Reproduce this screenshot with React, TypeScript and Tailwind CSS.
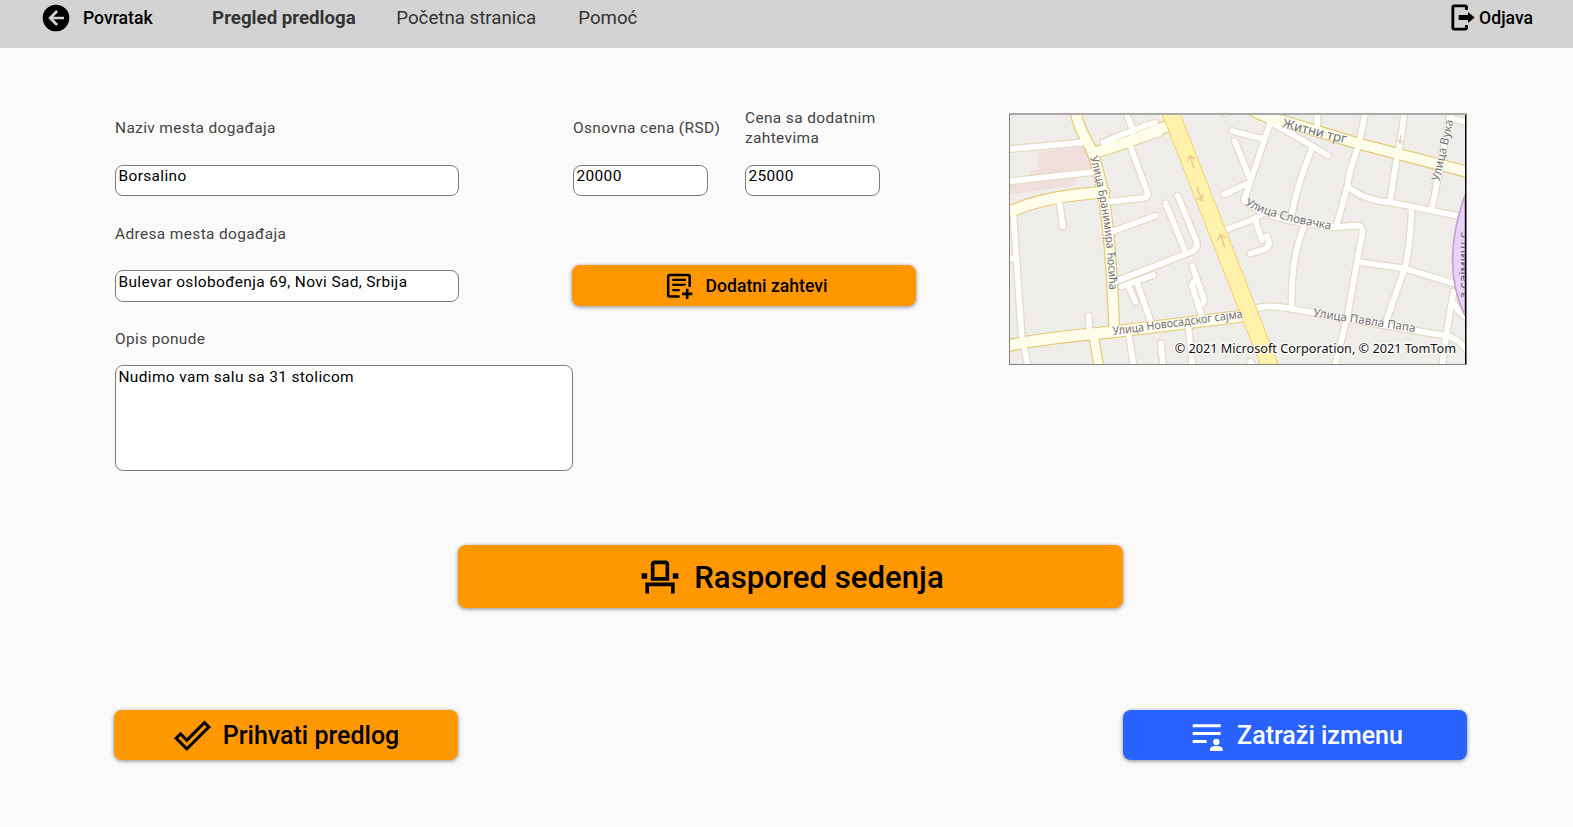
import type { ReactNode } from "react";
import { MdOutlineEventSeat } from "react-icons/md";

const minorRoads = [
  "M20,133 L250,112",
  "M20,230 L290,200",
  "M375,15 L400,80",
  "M390,120 L442,262 Q448,276 430,279 L330,290",
  "M330,382 L467,332",
  "M497,295 L556,440",
  "M533,272 L588,405 Q598,430 575,440 L350,528",
  "M365,545 L460,510",
  "M385,540 L406,590",
  "M410,530 L452,650",
  "M577,483 L611,580 Q614,595 600,600",
  "M588,525 Q570,535 579,552 L605,630",
  "M178,285 L188,365",
  "M40,325 L65,690 L85,790",
  "M20,461 L45,461",
  "M266,632 L268,672",
  "M386,685 L402,790",
  "M483,715 L490,790",
  "M565,660 L578,790",
  "M310,112 L440,60 L465,54",
  "M320,140 L480,84",
  "M672,268 L742,236",
  "M670,377 L710,362 Q760,345 783,330",
  "M765,345 L786,405",
  "M801,393 Q815,422 795,432 L751,446",
  "M697,78 L790,102",
  "M704,108 L750,220",
  "M810,55 L732,285",
  "M808,50 L880,90 L984,151",
  "M936,130 Q892,235 875,330",
  "M952,20 L952,85",
  "M1097,15 Q1085,80 1073,130 Q1045,205 1043,240 L1010,360",
  "M1213,20 Q1205,100 1190,160 L1170,290",
  "M1353,20 L1325,160 L1296,310",
  "M1350,38 L1410,55",
  "M1043,245 Q1090,285 1170,292 L1385,335",
  "M734,288 Q790,335 900,352 L1005,367 L1070,361 Q1092,361 1086,390 Q1065,500 1045,620 L1003,790",
  "M912,365 Q872,460 875,610",
  "M1075,471 L1210,490 L1360,535",
  "M1235,310 Q1230,440 1212,495 L1160,645",
  "M770,610 Q800,598 865,610 L1100,652 L1335,692 Q1375,698 1400,735",
  "M1361,560 Q1345,640 1325,790",
  "M1362,595 Q1375,625 1400,637",
  "M750,770 L765,790",
  "M668,15 L675,25",
];

const localRoads: [string, number][] = [
  ["M225,10 C232,60 250,90 270,125 C315,230 332,390 343,678", 32],
  ["M288,142 L380,112 L505,62", 34],
  ["M20,325 Q130,272 312,262", 35],
  ["M20,723 Q120,700 345,680 L740,632", 35],
  ["M280,690 L298,790", 28],
  ["M745,8 Q790,38 845,47 L1080,117 L1400,200", 33],
];

function Road({ d, width, casing, fill }: { d: string; width: number; casing: string; fill: string }) {
  return (
    <>
      <path d={d} stroke={casing} strokeWidth={width + 2} />
      <path d={d} stroke={fill} strokeWidth={width - 3} />
    </>
  );
}

function LocationMap() {
  return (
    <svg className="block h-[252px] w-[458px]" viewBox="27 24 1374 756" preserveAspectRatio="none">
      <defs>
        <path id="branimira" d="M269,158 C294,235 309,330 321,440 L330,580" />
        <path id="novosadskog" d="M340,690 L760,634" />
        <path id="trg" d="M845,67 L1062,122" />
        <path id="slovacka" d="M734,298 Q800,342 1000,375" />
        <path id="pavla" d="M938,634 L1260,684" />
        <path id="vuka" d="M1318,230 L1366,20" />
        <path id="sajmiste" d="M1400,580 L1400,370" />
      </defs>
      <rect x="27" y="24" width="1374" height="756" fill="#efedea" />
      <path d="M115,142 L250,124 L282,205 L88,215 L88,198 L115,195Z M27,240 L228,220 L228,241 L27,268Z" fill="#f0dedd" />
      <g fill="none" strokeLinecap="round" strokeLinejoin="round">
        {minorRoads.map((d) => (
          <path key={d} d={d} stroke="#e4d9c3" strokeWidth="24" />
        ))}
        {localRoads.map(([d, w]) => (
          <path key={d} d={d} stroke="#e6c872" strokeWidth={w + 4} />
        ))}
        {minorRoads.map((d) => (
          <path key={d} d={d} stroke="#ffffff" strokeWidth="17" />
        ))}
        {localRoads.map(([d, w]) => (
          <path key={d} d={d} stroke="#fffeea" strokeWidth={w - 3} />
        ))}
        <Road d="M495,-20 L836,850" width={51} casing="#fbc965" fill="#fff3ab" />
        <g stroke="#ebc993" strokeWidth="5" strokeLinecap="butt">
          <path d="M582,190 L570,152 M562,168 L570,152 L585,162" />
          <path d="M591,247 L605,285 M590,278 L605,286 L609,267" />
          <path d="M674,427 L662,390 M654,405 L662,389 L677,399" />
          <path d="M1200,118 L1203,88 M1195,104 L1200,116 L1210,106" stroke="#d8d2c4" strokeWidth="4" />
        </g>
      </g>
      <path d="M1395,270 C1345,410 1345,530 1395,632Z" fill="#e7d2fa" stroke="#c4a0cb" strokeWidth="5" />
      <g fontFamily="'Noto Sans', sans-serif" fill="#6f6f6f" stroke="#ffffff" strokeWidth="4" strokeOpacity="0.8" paintOrder="stroke" fontSize="35">
        <text><textPath href="#branimira" textLength="402" lengthAdjust="spacingAndGlyphs">Улица Бранимира Ћосића</textPath></text>
        <text><textPath href="#novosadskog" textLength="392" lengthAdjust="spacingAndGlyphs">Улица Новосадског сајма</textPath></text>
        <text fontSize="39"><textPath href="#trg" textLength="198" lengthAdjust="spacingAndGlyphs">Житни трг</textPath></text>
        <text><textPath href="#slovacka" textLength="270" lengthAdjust="spacingAndGlyphs">Улица Словачка</textPath></text>
        <text><textPath href="#pavla" textLength="310" lengthAdjust="spacingAndGlyphs">Улица Павла Папа</textPath></text>
        <text><textPath href="#vuka" textLength="188" lengthAdjust="spacingAndGlyphs">Улица Вука</textPath></text>
        <text stroke="none" fill="#6b5a74"><textPath href="#sajmiste" textLength="200" lengthAdjust="spacingAndGlyphs">з сајмиш с</textPath></text>
      </g>
      <text x="524" y="744" fontFamily="'Noto Sans', sans-serif" fontSize="38" fill="#111111" stroke="#ffffff" strokeWidth="7" strokeOpacity="0.75" paintOrder="stroke" textLength="844" lengthAdjust="spacingAndGlyphs">
        © 2021 Microsoft Corporation, © 2021 TomTom
      </text>
      <rect x="1395" y="30" width="3" height="747" fill="#000000" />
      <path d="M27,24H1401V30H27Z" fill="#a9a9a9" />
      <path d="M27,27H30V780H27Z M27,777H1401V780H27Z M1398,27H1401V780H1398Z" fill="#808080" />
    </svg>
  );
}

function BackIcon() {
  return (
    <svg className="size-8" viewBox="0 0 24 24">
      <path d="M2,12A10,10 0 0,1 12,2A10,10 0 0,1 22,12A10,10 0 0,1 12,22A10,10 0 0,1 2,12M18,11H10L13.5,7.5L12.08,6.08L6.16,12L12.08,17.92L13.5,16.5L10,13H18V11Z" />
    </svg>
  );
}

function LogoutIcon() {
  return (
    <svg className="h-[27px] w-6" viewBox="0 0 72 81">
      <path d="M46.5,18V9.500Q46.500,5.500 42.500,5.500H9.500Q5.500,5.500 5.500,9.500V71.500Q5.500,75.500 9.500,75.500H42.500Q46.500,75.500 46.500,71.500V63" fill="none" stroke="#000" strokeWidth="8.500" />
      <path d="M23,33H51V24L71,40.500L51,57V48H23Z" />
    </svg>
  );
}

function AddRequestIcon() {
  return (
    <svg className="size-8" viewBox="0 0 96 96">
      <path d="M83,54V23Q83,18 78,18H23Q18.500,18 18.500,23V78Q18.500,82.500 23,82.500H53" fill="none" stroke="#000" strokeWidth="7.500" />
      <path d="M31,29H72V36H31Z M31,44H72V48L64,51H31Z M31,60H53V67H31Z" />
      <path d="M60,74.500H91M75.500,59V90" stroke="#000" strokeWidth="8" />
    </svg>
  );
}

function AcceptIcon() {
  return (
    <svg className="size-[37px]" viewBox="0 0 24 24">
      <path d="M19.78,2.2L24,6.44L8.33,22.11L0,13.78L4.22,9.55L8.33,13.66L19.78,2.2M19.78,5L8.33,16.5L4.22,12.38L2.81,13.78L8.33,19.3L21.19,6.44L19.78,5Z" />
    </svg>
  );
}

function RequestChangeIcon() {
  return (
    <svg className="size-[37px]" viewBox="0 0 111 111" fill="#fff">
      <path d="M14,22H98V31H14Z M14,45H98V54H14Z M14,69H56V78H14Z" />
      <circle cx="85" cy="75" r="9.500" />
      <path d="M66,102V97Q67,87 85,87T104,97V102Z" />
    </svg>
  );
}

function Label({ children, className = "" }: { children: ReactNode; className?: string }) {
  return <div className={`flex items-center text-[15.45px] leading-5 tracking-[0.37px] text-[#444] ${className}`}>{children}</div>;
}

function Field({ children, className }: { children: ReactNode; className: string }) {
  return (
    <div className={`rounded-[8px] border border-[#7b7b7b] bg-white pl-[2.5px] text-[15.45px] leading-5 tracking-[0.36px] text-black ${className}`}>
      {children}
    </div>
  );
}

function ActionButton({ icon, children, className }: { icon: ReactNode; children: ReactNode; className: string }) {
  return (
    <button className={`flex items-center justify-center rounded-[8px] pl-px font-medium whitespace-nowrap shadow-[0_1px_4px_rgba(0,0,0,0.45)] ${className}`}>
      {icon}
      <span className="pl-3">{children}</span>
    </button>
  );
}

export default function App() {
  return (
    <div className="h-[827px] w-[1573px] overflow-hidden bg-[#fafafa] font-['Roboto',sans-serif]">
      <header className="flex h-12 items-center bg-[#d3d3d3] pr-[40px] pb-[13px] pl-[39.5px] whitespace-nowrap">
        <button className="flex items-center text-[17.6px] font-medium">
          <BackIcon />
          <span className="pt-0.5 pl-[11.5px]">Povratak</span>
        </button>
        <nav className="ml-[59.500px] flex gap-[40.500px] pt-0.5 text-[18.7px] text-[#333]">
          <span className="font-bold">Pregled predloga</span>
          <span>Početna stranica</span>
          <span className="pl-[1.5px]">Pomoć</span>
        </nav>
        <button className="ml-auto flex items-center text-[17.6px] font-medium">
          <LogoutIcon />
          <span className="pt-0.5 pl-1">Odjava</span>
        </button>
      </header>

      <main className="flex flex-col pt-[60px] pr-[106px] pl-[115px]">
        <section className="flex h-[363px]">
          <div className="w-[457px] shrink-0">
            <Label className="h-10">Naziv mesta događaja</Label>
            <Field className="mt-[17px] h-[31px] w-[344px]">Borsalino</Field>
            <Label className="mt-7 h-5">Adresa mesta događaja</Label>
            <Field className="mt-[26px] h-8 w-[344px] pt-px">Bulevar oslobođenja 69, Novi Sad, Srbija</Field>
            <Label className="mt-[27px] h-5">Opis ponude</Label>
            <Field className="mt-4 h-[106px] w-[458px] pt-px">Nudimo vam salu sa 31 stolicom</Field>
          </div>

          <div className="w-[437px] shrink-0">
            <div className="ml-px flex gap-[37px]">
              <div className="w-[135px]">
                <Label className="h-10 whitespace-nowrap">Osnovna cena (RSD)</Label>
                <Field className="mt-[17px] h-[31px]">20000</Field>
              </div>
              <div className="w-[135px]">
                <Label className="h-10">Cena sa dodatnim zahtevima</Label>
                <Field className="mt-[17px] h-[31px]">25000</Field>
              </div>
            </div>
            <ActionButton icon={<AddRequestIcon />} className="mt-[69px] h-[41px] w-[344px] bg-[#ff9800] pb-px text-[17.6px] text-black *:last:pt-0.5">
              Dodatni zahtevi
            </ActionButton>
          </div>

          <div className="mt-[5px] shrink-0">
            <LocationMap />
          </div>
        </section>

        <ActionButton icon={<MdOutlineEventSeat className="size-[44px]" />} className="mt-[74px] ml-[343px] h-[63px] w-[665px] bg-[#ff9800] text-[31.2px] text-black *:last:pt-[3px]">
          Raspored sedenja
        </ActionButton>

        <div className="mt-[102px] -ml-px flex justify-between">
          <ActionButton icon={<AcceptIcon />} className="h-[50px] w-[344px] bg-[#ff9800] text-[25px] text-black *:last:pt-px">
            Prihvati predlog
          </ActionButton>
          <ActionButton icon={<RequestChangeIcon />} className="h-[50px] w-[344px] bg-[#2962ff] text-[25px] text-white *:last:pt-px">
            Zatraži izmenu
          </ActionButton>
        </div>
      </main>
    </div>
  );
}
